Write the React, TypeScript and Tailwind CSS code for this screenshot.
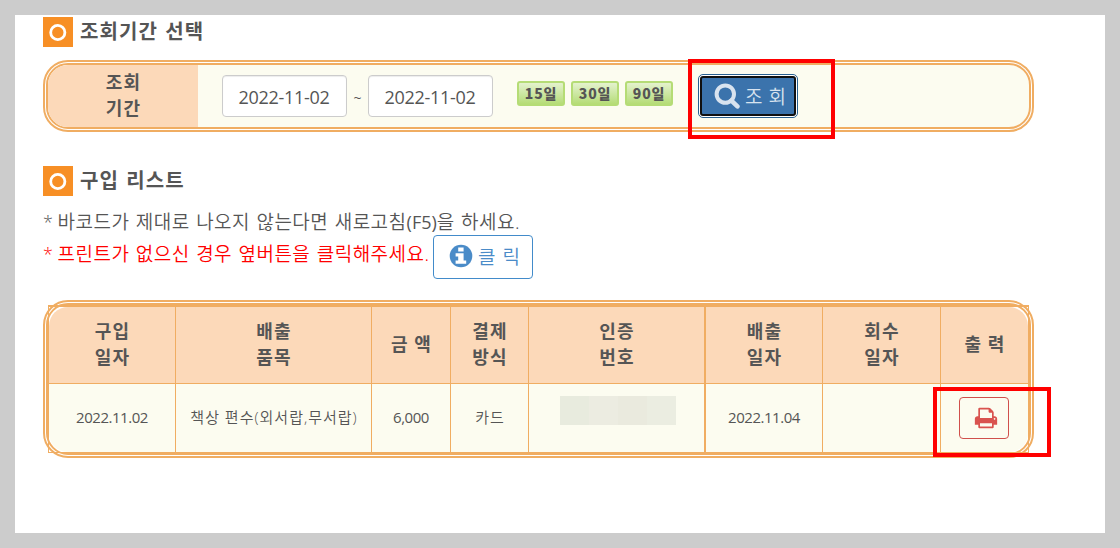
import type { ReactNode } from "react";

const PRINT_PATH =
  "M448 1536h896v-256h-896v256zm0-640h896v-384h-160q-40 0-68-28t-28-68v-160h-640v640zm1152 64q0-26-19-45t-45-19-45 19-19 45 19 45 45 19 45-19 19-45zm128 0v416q0 13-9.5 22.5t-22.5 9.5h-224v160q0 40-28 68t-68 28h-960q-40 0-68-28t-28-68v-160h-224q-13 0-22.5-9.5t-9.5-22.5v-416q0-79 56.5-135.5t135.5-56.5h64v-544q0-40 28-68t68-28h672q40 0 88 20t76 48l152 152q28 28 48 76t20 88v256h64q79 0 135.5 56.5t56.5 135.5z";

function SearchIcon() {
  return (
    <svg viewBox="0 0 26 26" fill="none" stroke="currentColor" className="size-[26px] shrink-0">
      <circle cx="11.3" cy="11.1" r="8.7" strokeWidth="4" />
      <path d="M17.4 17.6L23.4 23.4" strokeWidth="4.6" strokeLinecap="round" />
    </svg>
  );
}

function InfoIcon() {
  return (
    <svg viewBox="0 0 24 24" className="size-6 shrink-0">
      <circle cx="12" cy="12" r="11.3" fill="currentColor" />
      <path d="M9.2 3.6h5.4v3.8h-5.4zM6.6 9.2h8v7.2h2.6v3.4H6.6v-3.4h2.6v-3.8H6.6z" fill="#fff" />
    </svg>
  );
}

function SectionTitle({ children }: { children: ReactNode }) {
  return (
    <div className="flex h-[30px] items-center">
      <div className="size-[30px] bg-[#f78f25]">
        <svg viewBox="0 0 30 30" className="size-[30px]">
          <circle cx="14.8" cy="15.5" r="7.1" fill="none" stroke="#fff" strokeWidth="2.8" />
        </svg>
      </div>
      <h2 className="ml-[7px] text-[20px] leading-[28px] font-bold tracking-[1.1px] whitespace-nowrap [word-spacing:1px]">
        {children}
      </h2>
    </div>
  );
}

function DateInput({ value }: { value: string }) {
  return (
    <div className="flex h-[42px] w-[125px] items-center justify-center rounded border border-[#ccc] bg-white pt-0.5 pr-px text-[18px] tracking-[-0.3px] shadow-[inset_0_1px_1px_rgba(0,0,0,0.075)]">
      {value}
    </div>
  );
}

const columns = [
  { title: ["구입", "일자"], width: "w-[127px]", value: "2022.11.02" },
  { title: ["배출", "품목"], width: "w-[196px]", value: "책상 편수(외서랍,무서랍)" },
  { title: ["금 액"], width: "w-[79px]", value: "6,000" },
  { title: ["결제", "방식"], width: "w-[78px]", value: "카드" },
  { title: ["인증", "번호"], width: "w-[177px]", value: "masked" },
  { title: ["배출", "일자"], width: "w-[117px]", value: "2022.11.04" },
  { title: ["회수", "일자"], width: "w-[118px]", value: "" },
  { title: ["출 력"], width: "w-[87px]", value: "print" },
];

function CellValue({ value }: { value: string }) {
  if (value === "masked") {
    return (
      <div className="mb-[15px] ml-0.5 flex h-[29px] w-[116px]">
        <div className="flex-1 bg-[#e8ebde]" />
        <div className="flex-1 bg-[#ecece1]" />
        <div className="flex-1 bg-[#eaeade]" />
        <div className="flex-1 bg-[#ebede1]" />
      </div>
    );
  }
  if (value === "print") {
    return (
      <button className="mr-px flex h-[42px] w-[50px] items-center justify-center rounded border border-[#d0504c] text-[#d9534f]">
        <svg viewBox="0 0 1792 1792" fill="currentColor" className="-mt-px ml-1 size-6">
          <path d={PRINT_PATH} />
        </svg>
      </button>
    );
  }
  const korean = /[가-힣]/.test(value);
  return (
    <span
      className={`pb-0.5 text-[15px] whitespace-nowrap ${
        korean ? "pl-px font-[350] tracking-[1px]" : "font-normal tracking-[-0.45px]"
      }`}
    >
      {value}
    </span>
  );
}

export default function App() {
  return (
    <div className="relative h-[548px] w-[1120px] overflow-hidden bg-[#ccc] p-[15px] font-['Open_Sans','Noto_Sans_CJK_KR',sans-serif] text-[#555]">
      <div className="h-[518px] bg-white pt-0.5 pl-7">
        <SectionTitle>조회기간 선택</SectionTitle>

        {/* Search period */}
        <div className="mt-[13px] flex h-[72px] w-[991px] overflow-hidden rounded-[25px] border-[5px] border-double border-[#f0ad62] bg-[#fcfcf0] bg-clip-padding">
          <div className="flex w-[150px] items-center justify-center bg-[#fcd9b9] pb-0.5 pl-px text-center text-[18px] leading-[26px] font-bold tracking-[1.1px]">
            조회
            <br />
            기간
          </div>
          <div className="flex items-start pt-2.5 pl-6">
            <DateInput value="2022-11-02" />
            <span className="w-[21px] pt-[13px] text-center text-sm">~</span>
            <DateInput value="2022-11-02" />
            <div className="mt-1.5 ml-6 flex gap-1.5">
              {["15일", "30일", "90일"].map((label) => (
                <button
                  key={label}
                  className="flex h-[25px] w-12 items-center justify-center rounded-[3px] border-2 border-[#b5dc76] bg-linear-to-b from-[#e4f2cd] to-[#b5dc76] pb-px font-['Noto_Sans_CJK_KR',sans-serif] text-[14px] font-black tracking-[0.8px]"
                >
                  {label}
                </button>
              ))}
            </div>
            <button className="-mt-px ml-[25px] h-11 w-[100px] rounded-[5px] border border-[#286090] bg-white p-px">
              <span className="flex h-10 w-24 items-center rounded-[3px] border-2 border-[#101010] bg-[#3b73ac] pl-3 text-[#d8e3ef]">
                <SearchIcon />
                <span className="ml-[5px] pt-0.5 text-[19px] font-[350] tracking-[0.6px] whitespace-nowrap">조 회</span>
              </span>
            </button>
          </div>
        </div>

        <div className="mt-[34px]">
          <SectionTitle>구입 리스트</SectionTitle>
        </div>
        <p className="mt-3 h-7 text-[18px] leading-7 font-[350] whitespace-nowrap">
          * <span className="text-[19px] tracking-[0.5px] [word-spacing:0.9px]">바코드가 제대로 나오지 않는다면 새로고침<span className="text-[18px] font-normal tracking-normal">(F5)</span>을 하세요.</span>
        </p>
        <div className="-mt-px flex h-11">
          <p className="w-[390px] pt-[5px] text-[18px] leading-7 font-[350] whitespace-nowrap text-[#f00]">
            * <span className="text-[19px] tracking-[0.5px] [word-spacing:0.9px]">프린트가 없으신 경우 옆버튼을 클릭해주세요.</span>
          </p>
          <button className="flex h-11 w-[100px] items-center rounded border border-[#428bca] pl-[15px] text-[#4a8bc8]">
            <span className="pb-0.5">
              <InfoIcon />
            </span>
            <span className="ml-[5px] pt-px text-[19px] font-[350] tracking-[1px] whitespace-nowrap">클 릭</span>
          </button>
        </div>

        {/* Purchase list */}
        <div className="relative mt-[21px] h-[158px] w-[991px] p-[5px]">
          <div className="h-[148px] w-[981px] border border-t-2 border-[#f0ad62]">
            <div className="flex h-full overflow-hidden rounded-[19px]">
              {columns.map((col, i) => (
                <div
                  key={i}
                  className={`${col.width} flex shrink-0 flex-col border-[#f0ad62] ${
                    i === 7 ? "" : i === 4 ? "border-r-2" : "border-r"
                  }`}
                >
                  <div className="flex h-[77px] items-center justify-center border-b border-[#f0ad62] bg-[#fcd9b9] pb-0.5 pl-px text-center text-[18px] leading-[26px] font-bold tracking-[1.1px]">
                    <div>
                      {col.title.map((line) => (
                        <div key={line}>{line}</div>
                      ))}
                    </div>
                  </div>
                  <div className="flex h-[68px] items-center justify-center bg-[#fcfcf0]">
                    <CellValue value={col.value} />
                  </div>
                </div>
              ))}
            </div>
          </div>
          {/* rounded frame drawn over the square grid */}
          <div className="pointer-events-none absolute inset-0 rounded-[25px] border-[5px] border-double border-[#f0ad62]" />
        </div>
      </div>

      {/* Highlight boxes */}
      <div className="absolute top-[59px] left-[688px] h-20 w-[147px] border-4 border-[#f00]" />
      <div className="absolute top-[387px] left-[933px] h-[70px] w-[118px] border-4 border-[#f00]" />
    </div>
  );
}
